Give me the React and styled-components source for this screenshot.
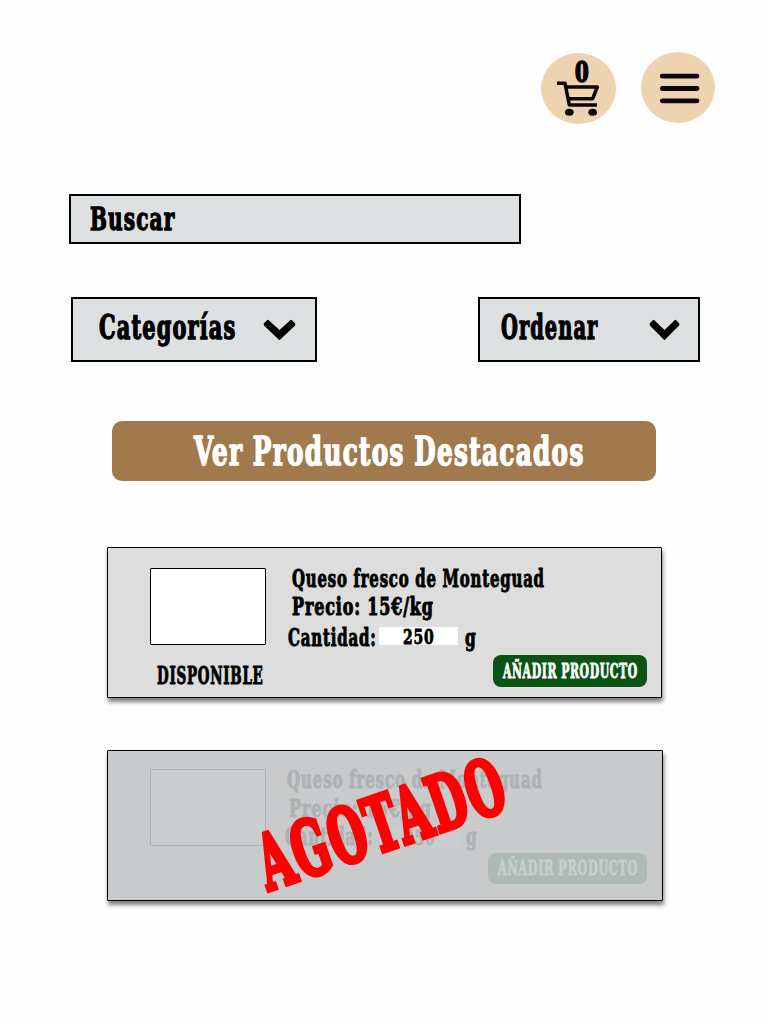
import React, { useLayoutEffect, useRef, useState } from 'react';
import styled, { createGlobalStyle } from 'styled-components';

const GlobalStyle = createGlobalStyle`
  * { box-sizing: border-box; }
  body { margin: 0; background: #fefefe; }
  button { font: inherit; border: 0; padding: 0; cursor: pointer; }
`;

const Page = styled.div`
  width: 768px;
  min-height: 1024px;
  display: flex;
  flex-direction: column;
  font-family: 'DejaVu Serif Condensed', 'DejaVu Serif', serif;
  font-stretch: condensed;
  font-weight: 700;
  color: #000;
`;

const LabelBox = styled.span`
  display: block;
  flex: none;
  width: ${(p) => p.$width}px;
  height: ${(p) => p.$line}px;
  line-height: ${(p) => p.$line}px;
  font-size: ${(p) => p.$size}px;
  margin-left: ${(p) => p.$indent || 0}px;
`;

const LabelText = styled.span`
  display: inline-block;
  vertical-align: top;
  white-space: nowrap;
  letter-spacing: 0.05em;
  margin-right: -0.05em;
  word-spacing: -0.02em;
  -webkit-text-stroke: ${(p) => p.$weight}em currentColor;
  transform-origin: left center;
`;

/* Condenses a piece of display text so that it fills the given width. */
function Label({ width, size, line, indent, weight = 0.04, children }) {
  const ref = useRef(null);
  const [scale, setScale] = useState(1);
  useLayoutEffect(() => {
    setScale(width / (ref.current.offsetWidth - size * 0.05));
  }, [width, size, children]);
  return (
    <LabelBox $width={width} $size={size} $line={line || size} $indent={indent}>
      <LabelText ref={ref} $weight={weight} style={{ transform: `scaleX(${scale})` }}>{children}</LabelText>
    </LabelBox>
  );
}

const Header = styled.header`
  display: flex;
  justify-content: flex-end;
  gap: 25px;
  padding: 52px 53px 0 0;
`;

const RoundButton = styled.button`
  width: ${(p) => p.$width}px;
  height: 71px;
  margin-top: ${(p) => p.$drop || 0}px;
  border-radius: 50%;
  background: #edd3b0;
  position: relative;
  color: #000;
  svg { display: block; width: 100%; height: 100%; }
`;

const CartCount = styled.span`
  position: absolute;
  left: 34px;
  top: 4px;
`;

const SearchBar = styled.div`
  width: 452px;
  height: 50px;
  margin: 70px 0 0 69px;
  padding: 7px 19px;
  border: 2px solid #000;
  background: #dde0e1;
`;

const Filters = styled.div`
  display: flex;
  justify-content: space-between;
  margin: 53px 68px 0 71px;
`;

const Select = styled.div`
  width: ${(p) => p.$width}px;
  height: 65px;
  display: flex;
  justify-content: space-between;
  padding: 12px ${(p) => p.$right}px 0 ${(p) => p.$left}px;
  border: 2px solid #000;
  background: #dde0e1;
`;

const Chevron = styled.svg`
  width: ${(p) => p.$width}px;
  height: 22px;
  margin-top: 8px;
`;

const FeaturedButton = styled.button`
  width: 544px;
  height: 60px;
  margin: 59px 0 0 112px;
  display: flex;
  align-items: center;
  padding: 0 0 0 82px;
  border-radius: 10px;
  background: #a0794c;
  color: #fff;
`;

const Products = styled.main`
  display: flex;
  flex-direction: column;
  gap: 52px;
  padding: 66px 0 0 107px;
`;

const Card = styled.article`
  position: relative;
  width: ${(p) => (p.$soldOut ? 556 : 555)}px;
  height: 151px;
  display: flex;
  border: 1px solid #000;
  border-radius: 1px;
  padding-left: 42px;
  background: ${(p) => (p.$soldOut ? '#c9cacc' : '#dddddd')};
  color: ${(p) => (p.$soldOut ? '#aeb2b3' : '#000')};
  box-shadow: 1px 4px 4px rgba(0, 0, 0, 0.5);
`;

const Media = styled.div`
  width: 116px;
  padding-top: ${(p) => (p.$soldOut ? 18 : 20)}px;
`;

const Picture = styled.div`
  height: 77px;
  margin-bottom: 19px;
  border: 1px solid ${(p) => (p.$soldOut ? '#adb1b2' : '#000')};
  border-radius: 1px;
  background: ${(p) => (p.$soldOut ? '#c9cdce' : '#fff')};
`;

const Details = styled.div`
  flex: 1;
  display: flex;
  flex-direction: column;
  padding: ${(p) => (p.$soldOut ? '15px 15px 0 19px' : '17px 14px 0 22px')};
`;

const Quantity = styled.div`
  display: flex;
  align-items: center;
  height: 28px;
  margin-top: ${(p) => (p.$soldOut ? 0 : 3)}px;
`;

const Amount = styled.div`
  display: flex;
  justify-content: center;
  width: ${(p) => (p.$soldOut ? 80 : 79)}px;
  height: 18px;
  margin: ${(p) => (p.$soldOut ? '0 7px 0 6px' : '-4px 7px 0 3px')};
  background: ${(p) => (p.$soldOut ? '#c9cdce' : '#fff')};
`;

const AddButton = styled.button`
  align-self: flex-end;
  display: flex;
  justify-content: center;
  align-items: center;
  width: ${(p) => (p.$soldOut ? 159 : 154)}px;
  height: ${(p) => (p.$soldOut ? 31 : 32)}px;
  margin-top: ${(p) => (p.$soldOut ? 2 : 3)}px;
  padding-top: ${(p) => (p.$soldOut ? 1 : 2)}px;
  border-radius: 8px;
  background: ${(p) => (p.$soldOut ? '#aeb9b3' : '#0b5313')};
  color: ${(p) => (p.$soldOut ? '#c9cdce' : '#fff')};
`;

const Stamp = styled.div`
  position: absolute;
  left: 145px;
  top: 34px;
  color: #f00;
  transform: rotate(-18.8deg);
`;

function Arrow({ width }) {
  return (
    <Chevron $width={width} viewBox="0 0 31 22" preserveAspectRatio="none">
      <path
        d="M4.6 1.6L15.5 12L26.4 1.6L29.6 4.8V6L15.5 20.2L1.4 6V4.8Z"
        fill="#000"
        stroke="#000"
        strokeWidth="1.4"
        strokeLinejoin="round"
      />
    </Chevron>
  );
}

function Product({ soldOut }) {
  const s = soldOut;
  return (
    <Card $soldOut={s}>
      <Media $soldOut={s}>
        <Picture $soldOut={s} />
        {!s && <Label width={106} size={24.5} indent={7}>DISPONIBLE</Label>}
      </Media>
      <Details $soldOut={s}>
        <Label width={s ? 255 : 252} size={24.5} line={28} indent={s ? 2 : 4}>Queso fresco de Monteguad</Label>
        <Label width={s ? 142 : 141} size={24.5} line={s ? 29 : 28} indent={4}>Precio: 15€/kg</Label>
        <Quantity $soldOut={s}>
          <Label width={88} size={24.5} line={28}>Cantidad:</Label>
          <Amount $soldOut={s}><Label width={31} size={20} line={20}>250</Label></Amount>
          <Label width={11} size={24.5} line={28}>g</Label>
        </Quantity>
        <AddButton $soldOut={s}>
          <Label width={s ? 139 : 134} size={19.5} line={20}>AÑADIR PRODUCTO</Label>
        </AddButton>
      </Details>
      {s && <Stamp><Label width={256} size={76} line={80} weight={0.062}>AGOTADO</Label></Stamp>}
    </Card>
  );
}

export default function App() {
  return (
    <Page>
      <GlobalStyle />
      <Header>
        <RoundButton $width={75} $drop={1}>
          <svg viewBox="33 39 225 213" preserveAspectRatio="none">
            <g fill="none" stroke="#0c0704" strokeWidth="10.5" strokeLinejoin="round">
              <path d="M81 130H105L118 195H201" />
              <path d="M108 141H202L188 176H116" />
            </g>
            <ellipse cx="118" cy="217" rx="13" ry="10.5" fill="#0c0704" />
            <ellipse cx="188" cy="217" rx="13" ry="10.5" fill="#0c0704" />
          </svg>
          <CartCount><Label width={14} size={27.5} line={30} weight={0.06}>0</Label></CartCount>
        </RoundButton>
        <RoundButton $width={74}>
          <svg viewBox="333 36 222 213" preserveAspectRatio="none">
            <g stroke="#0c0512" strokeWidth="14.5" strokeLinecap="round">
              <path d="M397 108.5H501M397 145.5H501M397 182.5H501" />
            </g>
          </svg>
        </RoundButton>
      </Header>
      <SearchBar><Label width={84} size={32.5} line={31}>Buscar</Label></SearchBar>
      <Filters>
        <Select $width={246} $left={26} $right={19}>
          <Label width={136} size={33.5} line={34}>Categorías</Label>
          <Arrow width={33} />
        </Select>
        <Select $width={222} $left={21} $right={18}>
          <Label width={96} size={33.5} line={34}>Ordenar</Label>
          <Arrow width={31} />
        </Select>
      </Filters>
      <FeaturedButton><Label width={389} size={39} line={40}>Ver Productos Destacados</Label></FeaturedButton>
      <Products>
        <Product />
        <Product soldOut />
      </Products>
    </Page>
  );
}
